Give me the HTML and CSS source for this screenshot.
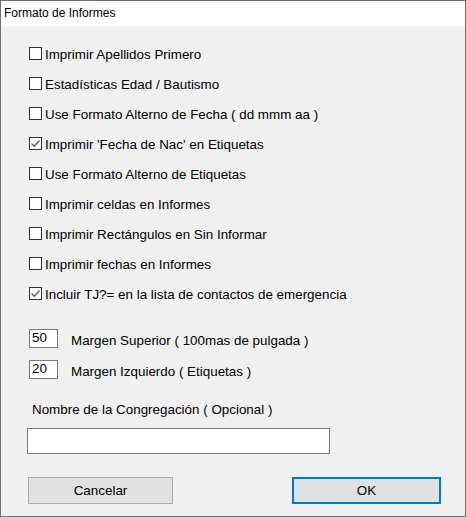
FILE: index.html
```html
<!DOCTYPE html>
<html lang="es">
<head>
<meta charset="utf-8">
<title>Formato de Informes</title>
<link rel="stylesheet" href="styles.css">
</head>
<body>
<div class="window">
  <div class="titlebar">Formato de Informes</div>
  <div class="content">
    <div class="checks">
      <div class="check"><span class="box"></span><span class="txt">Imprimir Apellidos Primero</span></div>
      <div class="check"><span class="box"></span><span class="txt">Estadísticas Edad / Bautismo</span></div>
      <div class="check"><span class="box"></span><span class="txt">Use Formato Alterno de Fecha ( dd mmm aa )</span></div>
      <div class="check"><span class="box"><svg width="11" height="11" viewBox="0 0 11 11"><path d="M1.5 5.5 L4.2 8.2 L9.5 2.5" fill="none" stroke="#5a5a5a" stroke-width="1.3"/></svg></span><span class="txt">Imprimir 'Fecha de Nac' en Etiquetas</span></div>
      <div class="check"><span class="box"></span><span class="txt">Use Formato Alterno de Etiquetas</span></div>
      <div class="check"><span class="box"></span><span class="txt">Imprimir celdas en Informes</span></div>
      <div class="check"><span class="box"></span><span class="txt">Imprimir Rectángulos en Sin Informar</span></div>
      <div class="check"><span class="box"></span><span class="txt">Imprimir fechas en Informes</span></div>
      <div class="check"><span class="box"><svg width="11" height="11" viewBox="0 0 11 11"><path d="M1.5 5.5 L4.2 8.2 L9.5 2.5" fill="none" stroke="#5a5a5a" stroke-width="1.3"/></svg></span><span class="txt">Incluir TJ?= en la lista de contactos de emergencia</span></div>
    </div>
    <div class="margins">
      <div class="mrow"><div class="num">50</div><span class="mlabel">Margen Superior ( 100mas de pulgada )</span></div>
      <div class="mrow"><div class="num">20</div><span class="mlabel">Margen Izquierdo ( Etiquetas )</span></div>
    </div>
    <div class="cong-label">Nombre de la Congregación ( Opcional )</div>
    <div class="cong-input"></div>
    <div class="buttons">
      <div class="btn cancel">Cancelar</div>
      <div class="btn ok">OK</div>
    </div>
  </div>
</div>
</body>
</html>
```
FILE: styles.css
```css
* { box-sizing: border-box; }
html, body { margin: 0; padding: 0; background: #f0f0f0; }
body {
  font-family: "Liberation Sans", Arial, sans-serif;
  font-size: 13.4px;
  color: #000;
}
.window {
  width: 466px;
  height: 517px;
  border: 1px solid #707070;
  background: #f0f0f0;
  display: flex;
  flex-direction: column;
}
.titlebar {
  height: 25px;
  line-height: 25px;
  background: #fff;
  font-size: 12px;
  padding-left: 3px;
}
.content {
  padding-left: 28px;
  display: flex;
  flex-direction: column;
}
.checks {
  margin-top: 21px;
  display: flex;
  flex-direction: column;
  gap: 17px;
}
.check {
  display: flex;
  align-items: flex-start;
  height: 13px;
}
.box {
  width: 13px;
  height: 13px;
  border: 1px solid #333;
  background: #fff;
  flex: none;
  display: block;
}
.box svg { display: block; }
.txt {
  margin-left: 3px;
  line-height: 13px;
  margin-top: 1px;
  white-space: nowrap;
}
.margins {
  margin-top: 29px;
  display: flex;
  flex-direction: column;
  gap: 12px;
}
.mrow {
  display: flex;
  align-items: flex-end;
  height: 19px;
}
.num {
  width: 29px;
  height: 19px;
  border: 1px solid #7a7a7a;
  background: #fff;
  padding-left: 2px;
  line-height: 15px;
}
.mlabel {
  margin-left: 13px;
  line-height: 15px;
  white-space: nowrap;
}
.cong-label {
  margin-top: 23px;
  margin-left: 3px;
  line-height: 15px;
}
.cong-input {
  margin-top: 11px;
  margin-left: -2px;
  width: 303px;
  height: 26px;
  border: 1px solid #7a7a7a;
  background: #fff;
}
.buttons {
  margin-top: 23px;
  display: flex;
}
.btn {
  height: 27px;
  background: #e1e1e1;
  display: flex;
  align-items: center;
  justify-content: center;
}
.cancel {
  margin-left: -1px;
  width: 145px;
  border: 1px solid #adadad;
}
.ok {
  margin-left: 119px;
  width: 149px;
  border: 2px solid #0078d7;
}
```
